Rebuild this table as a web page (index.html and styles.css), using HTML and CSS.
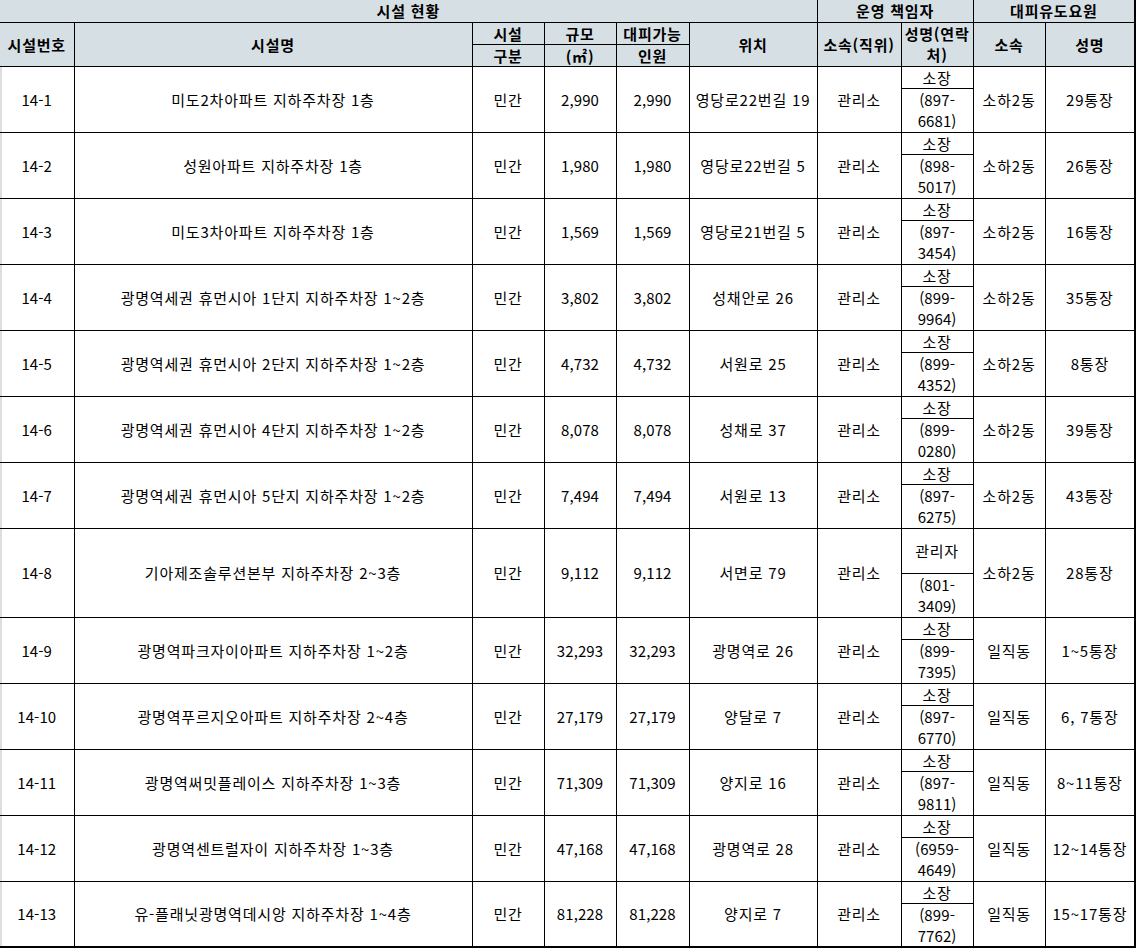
FILE: index.html
```html
<!DOCTYPE html>
<html lang="ko">
<head>
<meta charset="utf-8">
<title>시설 현황</title>
<link rel="stylesheet" href="styles.css">
</head>
<body>
<table class="sheet">
  <colgroup>
    <col class="c-no"><col class="c-name"><col class="c-type"><col class="c-size"><col class="c-cap"><col class="c-loc"><col class="c-org"><col class="c-mgr"><col class="c-dept"><col class="c-staff">
  </colgroup>
  <thead>
    <tr class="h1">
      <th colspan="6">시설 현황</th>
      <th colspan="2">운영 책임자</th>
      <th colspan="2" class="last">대피유도요원</th>
    </tr>
    <tr class="h2">
      <th rowspan="2">시설번호</th>
      <th rowspan="2">시설명</th>
      <th>시설</th>
      <th>규모</th>
      <th>대피가능</th>
      <th rowspan="2">위치</th>
      <th rowspan="2">소속(직위)</th>
      <th rowspan="2" class="two">성명(연락<br>처)</th>
      <th rowspan="2">소속</th>
      <th rowspan="2" class="last">성명</th>
    </tr>
    <tr class="h3">
      <th>구분</th>
      <th>(㎡)</th>
      <th>인원</th>
    </tr>
  </thead>
  <tbody>
    <tr class="r1"><td rowspan="2" class="no">14-1</td><td rowspan="2">미도2차아파트 지하주차장 1층</td><td rowspan="2">민간</td><td rowspan="2" class="num">2,990</td><td rowspan="2" class="num">2,990</td><td rowspan="2">영당로22번길 19</td><td rowspan="2">관리소</td><td>소장</td><td rowspan="2">소하2동</td><td rowspan="2" class="last">29통장</td></tr>
    <tr class="r2"><td class="tel">(897-<br>6681)</td></tr>

    <tr class="r1"><td rowspan="2" class="no">14-2</td><td rowspan="2">성원아파트 지하주차장 1층</td><td rowspan="2">민간</td><td rowspan="2" class="num">1,980</td><td rowspan="2" class="num">1,980</td><td rowspan="2">영당로22번길 5</td><td rowspan="2">관리소</td><td>소장</td><td rowspan="2">소하2동</td><td rowspan="2" class="last">26통장</td></tr>
    <tr class="r2"><td class="tel">(898-<br>5017)</td></tr>

    <tr class="r1"><td rowspan="2" class="no">14-3</td><td rowspan="2">미도3차아파트 지하주차장 1층</td><td rowspan="2">민간</td><td rowspan="2" class="num">1,569</td><td rowspan="2" class="num">1,569</td><td rowspan="2">영당로21번길 5</td><td rowspan="2">관리소</td><td>소장</td><td rowspan="2">소하2동</td><td rowspan="2" class="last">16통장</td></tr>
    <tr class="r2"><td class="tel">(897-<br>3454)</td></tr>

    <tr class="r1"><td rowspan="2" class="no">14-4</td><td rowspan="2">광명역세권 휴먼시아 1단지 지하주차장 1~2층</td><td rowspan="2">민간</td><td rowspan="2" class="num">3,802</td><td rowspan="2" class="num">3,802</td><td rowspan="2">성채안로 26</td><td rowspan="2">관리소</td><td>소장</td><td rowspan="2">소하2동</td><td rowspan="2" class="last">35통장</td></tr>
    <tr class="r2"><td class="tel">(899-<br>9964)</td></tr>

    <tr class="r1"><td rowspan="2" class="no">14-5</td><td rowspan="2">광명역세권 휴먼시아 2단지 지하주차장 1~2층</td><td rowspan="2">민간</td><td rowspan="2" class="num">4,732</td><td rowspan="2" class="num">4,732</td><td rowspan="2">서원로 25</td><td rowspan="2">관리소</td><td>소장</td><td rowspan="2">소하2동</td><td rowspan="2" class="last">8통장</td></tr>
    <tr class="r2"><td class="tel">(899-<br>4352)</td></tr>

    <tr class="r1"><td rowspan="2" class="no">14-6</td><td rowspan="2">광명역세권 휴먼시아 4단지 지하주차장 1~2층</td><td rowspan="2">민간</td><td rowspan="2" class="num">8,078</td><td rowspan="2" class="num">8,078</td><td rowspan="2">성채로 37</td><td rowspan="2">관리소</td><td>소장</td><td rowspan="2">소하2동</td><td rowspan="2" class="last">39통장</td></tr>
    <tr class="r2"><td class="tel">(899-<br>0280)</td></tr>

    <tr class="r1"><td rowspan="2" class="no">14-7</td><td rowspan="2">광명역세권 휴먼시아 5단지 지하주차장 1~2층</td><td rowspan="2">민간</td><td rowspan="2" class="num">7,494</td><td rowspan="2" class="num">7,494</td><td rowspan="2">서원로 13</td><td rowspan="2">관리소</td><td>소장</td><td rowspan="2">소하2동</td><td rowspan="2" class="last">43통장</td></tr>
    <tr class="r2"><td class="tel">(897-<br>6275)</td></tr>

    <tr class="r1 tall"><td rowspan="2" class="no">14-8</td><td rowspan="2">기아제조솔루션본부 지하주차장 2~3층</td><td rowspan="2">민간</td><td rowspan="2" class="num">9,112</td><td rowspan="2" class="num">9,112</td><td rowspan="2">서면로 79</td><td rowspan="2">관리소</td><td>관리자</td><td rowspan="2">소하2동</td><td rowspan="2" class="last">28통장</td></tr>
    <tr class="r2"><td class="tel">(801-<br>3409)</td></tr>

    <tr class="r1"><td rowspan="2" class="no">14-9</td><td rowspan="2">광명역파크자이아파트 지하주차장 1~2층</td><td rowspan="2">민간</td><td rowspan="2" class="num">32,293</td><td rowspan="2" class="num">32,293</td><td rowspan="2">광명역로 26</td><td rowspan="2">관리소</td><td>소장</td><td rowspan="2">일직동</td><td rowspan="2" class="last">1~5통장</td></tr>
    <tr class="r2"><td class="tel">(899-<br>7395)</td></tr>

    <tr class="r1"><td rowspan="2" class="no">14-10</td><td rowspan="2">광명역푸르지오아파트 지하주차장 2~4층</td><td rowspan="2">민간</td><td rowspan="2" class="num">27,179</td><td rowspan="2" class="num">27,179</td><td rowspan="2">양달로 7</td><td rowspan="2">관리소</td><td>소장</td><td rowspan="2">일직동</td><td rowspan="2" class="last">6, 7통장</td></tr>
    <tr class="r2"><td class="tel">(897-<br>6770)</td></tr>

    <tr class="r1"><td rowspan="2" class="no">14-11</td><td rowspan="2">광명역써밋플레이스 지하주차장 1~3층</td><td rowspan="2">민간</td><td rowspan="2" class="num">71,309</td><td rowspan="2" class="num">71,309</td><td rowspan="2">양지로 16</td><td rowspan="2">관리소</td><td>소장</td><td rowspan="2">일직동</td><td rowspan="2" class="last">8~11통장</td></tr>
    <tr class="r2"><td class="tel">(897-<br>9811)</td></tr>

    <tr class="r1"><td rowspan="2" class="no">14-12</td><td rowspan="2">광명역센트럴자이 지하주차장 1~3층</td><td rowspan="2">민간</td><td rowspan="2" class="num">47,168</td><td rowspan="2" class="num">47,168</td><td rowspan="2">광명역로 28</td><td rowspan="2">관리소</td><td>소장</td><td rowspan="2">일직동</td><td rowspan="2" class="last">12~14통장</td></tr>
    <tr class="r2"><td class="tel">(6959-<br>4649)</td></tr>

    <tr class="r1"><td rowspan="2" class="no">14-13</td><td rowspan="2">유-플래닛광명역데시앙 지하주차장 1~4층</td><td rowspan="2">민간</td><td rowspan="2" class="num">81,228</td><td rowspan="2" class="num">81,228</td><td rowspan="2">양지로 7</td><td rowspan="2">관리소</td><td>소장</td><td rowspan="2">일직동</td><td rowspan="2" class="last">15~17통장</td></tr>
    <tr class="r2 end"><td class="tel">(899-<br>7762)</td></tr>
  </tbody>
</table>
</body>
</html>
```

FILE: styles.css
```css
html, body {
  margin: 0;
  padding: 0;
  background: #ffffff;
}

.sheet {
  border-collapse: collapse;
  table-layout: fixed;
  width: 1135px;
  font-family: "Noto Sans CJK KR", "Noto Sans", sans-serif;
  font-size: 15px;
  letter-spacing: 0.8px;
  line-height: 21px;
  color: #000;
  border-right: 2px solid #000;
  border-bottom: 2px solid #000;
}

.c-no { width: 74px; }
.c-name { width: 398px; }
.c-type { width: 72px; }
.c-size { width: 72px; }
.c-cap { width: 73px; }
.c-loc { width: 128px; }
.c-org { width: 84px; }
.c-mgr { width: 72px; }
.c-dept { width: 72px; }
.c-staff { width: 90px; }

.sheet th,
.sheet td {
  border: 1px solid #000;
  padding: 0;
  text-align: center;
  vertical-align: middle;
  white-space: nowrap;
}

.sheet th {
  background: #d6dfe4;
  font-weight: 700;
}

.sheet th.two {
  line-height: 21.5px;
}

.sheet td.num,
.sheet td.no,
.sheet td.tel {
  letter-spacing: 0.1px;
}

.sheet td.tel {
  line-height: 21.5px;
}

.sheet tr.end td.tel {
  line-height: 21px;
}

.sheet th:first-child,
.sheet td.no {
  border-left: none;
}

.sheet td.no {
  box-shadow: inset 2px 0 0 #dedede;
}

.sheet tr.h1 th {
  border-top: none;
}

.sheet .last {
  border-right: 2px solid #000;
}

.h1, .h2, .h3 { height: 22px; }
.r1 { height: 22px; }
.r2 { height: 44px; }
.r1.tall { height: 45px; }
.r2.end td { border-bottom: 2px solid #000; }
```
